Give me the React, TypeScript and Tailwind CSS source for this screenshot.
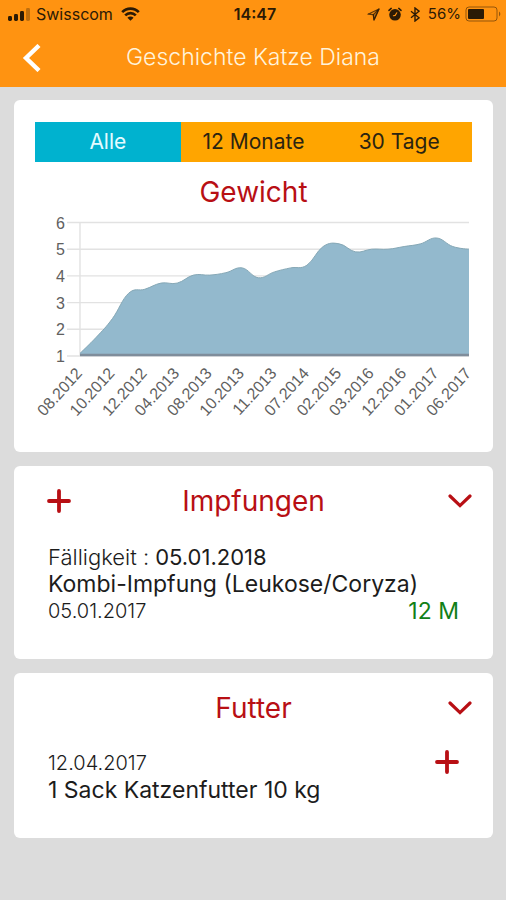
import { useState } from "react";
import type { ReactNode } from "react";

// Status bar
// ━━━━━━━━━━━━━━━━━━━━━━━━━━━━━━━━━━━━━━━━━━━━━━━━━━━━━━━━━━━━━━━━━━━━━━

function SignalIcon() {
  return (
    <svg className="w-[22px] h-[14px]" viewBox="0 0 22 14" fill="currentColor">
      <rect x="0" y="9" width="4" height="5" rx="1.4" />
      <rect x="6" y="7" width="4" height="7" rx="1.4" />
      <rect x="12" y="4" width="4" height="10" rx="1.4" />
      <rect x="18" y="1" width="4" height="13" rx="1.4" opacity="0.3" />
    </svg>
  );
}

function WifiIcon() {
  return (
    <svg className="w-[19px] h-[14px]" viewBox="0 0 19 14" fill="none" stroke="currentColor" strokeWidth="2.6">
      <path d="M1.2 5.2C5.8 .4 13.2 .4 17.8 5.2" />
      <path d="M4.2 8.4C7.2 5.3 11.8 5.3 14.8 8.4" />
      <path d="M9.5 13.8 6.4 10.8C8.2 9.2 10.8 9.2 12.6 10.8Z" fill="currentColor" stroke="none" />
    </svg>
  );
}

function LocationIcon() {
  return (
    <svg className="w-[13px] h-[13px]" viewBox="0 0 13 13" fill="none" stroke="currentColor" strokeOpacity="0.75" strokeWidth="1.2" strokeLinejoin="round">
      <path d="M12 1 1 6.2 6.3 6.7 7 12Z" />
      <path d="M12 1 6.3 6.7 7 12Z" fill="currentColor" fillOpacity="0.3" />
    </svg>
  );
}

function AlarmIcon() {
  return (
    <svg className="w-[14px] h-[14px]" viewBox="0 0 14 14">
      <circle cx="7" cy="7.8" r="5.8" fill="currentColor" />
      <path d="M1 3.4 3.2 1.4M13 3.4 10.8 1.4" stroke="currentColor" strokeWidth="1.5" strokeLinecap="round" />
      <path d="M5.4 8.8 7.2 8.4 8.8 5.8" fill="none" stroke="#ff9311" strokeWidth="1.1" strokeLinecap="round" />
    </svg>
  );
}

function BluetoothIcon() {
  return (
    <svg className="w-[10px] h-[15px]" viewBox="0 0 10 15" fill="none" stroke="currentColor" strokeWidth="1.4">
      <path d="M1 4.2 9 10.8 5 14V1L9 4.2 1 10.8" />
    </svg>
  );
}

function BatteryIcon() {
  return (
    <svg className="w-[37px] h-[16px]" viewBox="0 0 37 16" fill="none">
      <rect x="1" y="1" width="31" height="14" rx="3" stroke="currentColor" strokeOpacity="0.5" />
      <rect x="3" y="3" width="16" height="10" rx="1" fill="currentColor" />
      <path d="M34 5.6C35.8 6.4 35.8 9.6 34 10.4Z" fill="currentColor" fillOpacity="0.5" />
    </svg>
  );
}

function StatusBar() {
  return (
    <div className="grid grid-cols-[1fr_auto_1fr] items-center h-[28px] pl-2 pr-1 text-[#2b1a05]">
      <div className="flex items-center gap-1.5">
        <SignalIcon />
        <span className="text-[16px]">Swisscom</span>
        <span className="pl-0.5">
          <WifiIcon />
        </span>
      </div>
      <span className="text-[16px] font-semibold">14:47</span>
      <div className="flex items-center justify-end gap-2">
        <LocationIcon />
        <AlarmIcon />
        <BluetoothIcon />
        <div className="flex items-center gap-1">
          <span className="text-[15px]">56%</span>
          <BatteryIcon />
        </div>
      </div>
    </div>
  );
}

// Icons
// ━━━━━━━━━━━━━━━━━━━━━━━━━━━━━━━━━━━━━━━━━━━━━━━━━━━━━━━━━━━━━━━━━━━━━━

function PlusIcon() {
  return (
    <svg className="w-6 h-6" viewBox="0 0 24 24" fill="none" stroke="currentColor" strokeWidth="3.8" strokeLinecap="round">
      <path d="M12 2V22M2 12H22" />
    </svg>
  );
}

function ChevronDownIcon() {
  return (
    <svg className="w-6 h-4" viewBox="0 0 24 16" fill="none" stroke="currentColor" strokeWidth="3.2" strokeLinecap="round">
      <path d="M2 3 12 12.6 22 3" />
    </svg>
  );
}

// Weight chart
// ━━━━━━━━━━━━━━━━━━━━━━━━━━━━━━━━━━━━━━━━━━━━━━━━━━━━━━━━━━━━━━━━━━━━━━

const WEIGHTS = [
  1.1, 1.7, 2.4, 3.35, 3.5, 3.73, 3.73, 4.03, 4.03, 4.12, 4.3, 3.93, 4.15,
  4.3, 4.4, 5.1, 5.2, 4.9, 5, 5, 5.1, 5.2, 5.42, 5.1, 5,
];

const MONTHS = [
  "08.2012", "10.2012", "12.2012", "04.2013", "08.2013", "10.2013", "11.2013",
  "07.2014", "02.2015", "03.2016", "12.2016", "01.2017", "06.2017",
];

const LEFT = 45;
const RIGHT = 434;
const BOTTOM = 146;
const UNIT = 26.7;

const toY = (value: number) => BOTTOM - (value - 1) * UNIT;

// Smooth line through all points, control points along the neighbours' chord
function linePath(values: number[]) {
  const step = (RIGHT - LEFT) / (values.length - 1);
  const pts = values.map((v, i) => ({ x: LEFT + i * step, y: toY(v) }));
  const slope = (i: number) => {
    if (i === 0 || i === pts.length - 1) return 0;
    return (pts[i + 1].y - pts[i - 1].y) * 0.2;
  };
  let d = `M${pts[0].x} ${pts[0].y}`;
  for (let i = 1; i < pts.length; i++) {
    const a = pts[i - 1];
    const b = pts[i];
    // The two ends have no handle of their own
    const ax = i === 1 ? a.x : a.x + step * 0.4;
    const bx = i === pts.length - 1 ? b.x : b.x - step * 0.4;
    d += `C${ax} ${a.y + slope(i - 1)} ${bx} ${b.y - slope(i)} ${b.x} ${b.y}`;
  }
  return d;
}

function WeightChart() {
  const line = linePath(WEIGHTS);
  const labelStep = (RIGHT - LEFT) / (MONTHS.length - 1);
  return (
    <svg
      className="block w-full overflow-visible font-['Liberation_Sans',Arial,sans-serif] text-[16px]"
      viewBox="0 0 437 212"
      role="img"
      aria-label="Gewicht"
    >
      {[1, 2, 3, 4, 5, 6].map((v) => (
        <g key={v}>
          <line x1={LEFT - 13} x2={RIGHT} y1={toY(v)} y2={toY(v)} stroke="#e2e2e2" strokeWidth="1.4" />
          <text x={LEFT - 15} y={toY(v) + 6} textAnchor="end" fill="#606060">
            {v}
          </text>
        </g>
      ))}
      <line x1={LEFT} x2={LEFT} y1={toY(6)} y2={BOTTOM} stroke="#e2e2e2" strokeWidth="1.4" />
      <path d={`${line}V${BOTTOM}H${LEFT}Z`} fill="#93b9cd" />
      <path d={line} fill="none" stroke="#86a8b6" strokeWidth="1" />
      <line x1={LEFT} x2={RIGHT} y1={BOTTOM - 1} y2={BOTTOM - 1} stroke="#7f8d9b" strokeWidth="2.4" />
      {MONTHS.map((month, i) => (
        <text
          key={month}
          textAnchor="end"
          fill="#606060"
          transform={`translate(${LEFT + i * labelStep + 3} ${BOTTOM + 18}) rotate(-48)`}
        >
          {month}
        </text>
      ))}
    </svg>
  );
}

// Cards
// ━━━━━━━━━━━━━━━━━━━━━━━━━━━━━━━━━━━━━━━━━━━━━━━━━━━━━━━━━━━━━━━━━━━━━━

interface CardProps {
  children: ReactNode;
  className?: string;
}

function Card({ children, className = "" }: CardProps) {
  return <section className={`rounded-md bg-white px-[21px] ${className}`}>{children}</section>;
}

interface CardHeaderProps {
  title: string;
  withAdd?: boolean;
}

function CardHeader({ title, withAdd = false }: CardHeaderProps) {
  return (
    <div className="grid grid-cols-[48px_1fr_48px] items-center h-9 text-[#b80f14]">
      {withAdd ? (
        <button type="button" aria-label={`${title} hinzufügen`} className="justify-self-center">
          <PlusIcon />
        </button>
      ) : (
        <span />
      )}
      <h2 className="text-center text-[28px] leading-9">{title}</h2>
      <button type="button" aria-label={`${title} anzeigen`} className="justify-self-end">
        <ChevronDownIcon />
      </button>
    </div>
  );
}

const RANGES = ["Alle", "12 Monate", "30 Tage"];

export default function App() {
  const [range, setRange] = useState("Alle");

  return (
    <div className="min-h-screen bg-[#dcdcdc] font-[Inter,sans-serif] text-[#1c1c1c]">
      <header className="bg-[#ff9311]">
        <StatusBar />
        <div className="grid grid-cols-[48px_1fr_48px] items-center h-[59px] pl-2">
          <button type="button" aria-label="Zurück" className="justify-self-center text-white">
            <svg className="w-5 h-7" viewBox="0 0 20 28" fill="none" stroke="currentColor" strokeWidth="4.4">
              <path d="M17 1.5 4 14 17 26.5" />
            </svg>
          </button>
          <h1 className="pr-2 text-center text-[23px] font-light text-[#fff3dc]">Geschichte Katze Diana</h1>
        </div>
      </header>

      <main className="flex flex-col gap-3.5 pl-[14px] pr-[13px] pt-[13px] pb-6">
        <Card className="pt-[22px] pb-[30px]">
          <div className="grid grid-cols-3">
            {RANGES.map((name) => (
              <button
                key={name}
                type="button"
                aria-pressed={range === name}
                onClick={() => setRange(name)}
                className={`h-10 text-[21px] leading-10 ${
                  range === name ? "bg-[#00b2cf] text-[#e4fbff]" : "bg-[#ffa500] text-[#2b2411]"
                }`}
              >
                {name}
              </button>
            ))}
          </div>
          <h2 className="pt-3 text-center text-[28px] leading-9 text-[#b80f14]">Gewicht</h2>
          <WeightChart />
        </Card>

        <Card className="pt-[17px] pb-[34px]">
          <CardHeader title="Impfungen" withAdd />
          <div className="px-[13px] pt-[25px] text-[23px] leading-[27px]">
            <div className="flex gap-1.5 text-[22px] leading-[27px]">
              <span className="font-light">Fälligkeit :</span>
              <span>05.01.2018</span>
            </div>
            <p>Kombi-Impfung (Leukose/Coryza)</p>
            <div className="flex justify-between">
              <span className="text-[20px] font-light">05.01.2017</span>
              <span>
                <span className="text-[#128018]">12 M</span>
              </span>
            </div>
          </div>
        </Card>

        <Card className="pt-[17px] pb-[34px]">
          <CardHeader title="Futter" />
          <div className="flex items-start justify-between px-[13px] pt-6 text-[23px] leading-[27px]">
            <div>
              <p className="text-[20px] font-light">12.04.2017</p>
              <p>1 Sack Katzenfutter 10 kg</p>
            </div>
            <button type="button" aria-label="Futter hinzufügen" className="text-[#b80f14]">
              <PlusIcon />
            </button>
          </div>
        </Card>
      </main>
    </div>
  );
}
